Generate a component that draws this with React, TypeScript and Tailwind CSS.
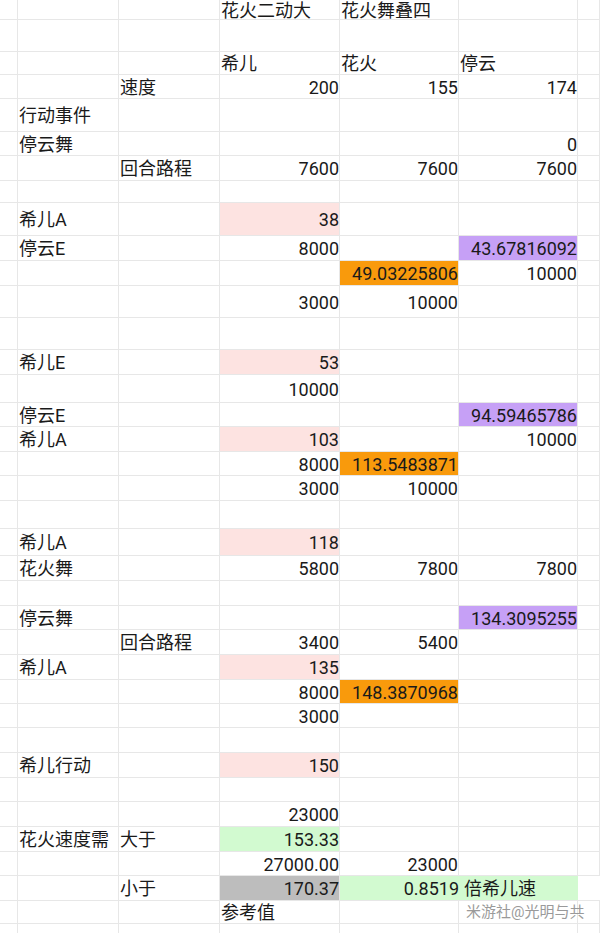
import React from "react";

type Cell = { t?: string; r?: boolean; bg?: string };
type Row = { h: string; c: Record<number, Cell> };

const W = ["w-[18px]", "w-[101px]", "w-[101px]", "w-[120px]", "w-[119px]", "w-[119px]", "flex-1"];

const PINK = "bg-[#fde3e1]";
const PURPLE = "bg-[#c6a0f6]";
const ORANGE = "bg-[#f99a0c]";
const GREEN = "bg-[#d2fad0]";
const GRAY = "bg-[#bdbdbd]";

const n = (t: string, bg?: string): Cell => ({ t, r: true, bg });
const l = (t: string, bg?: string): Cell => ({ t, bg });

const rows: Row[] = [
  { h: "h-[20px]", c: { 3: l("花火二动大"), 4: l("花火舞叠四") } },
  { h: "h-[32px]", c: {} },
  { h: "h-[23px]", c: { 3: l("希儿"), 4: l("花火"), 5: l("停云") } },
  { h: "h-[24px]", c: { 2: l("速度"), 3: n("200"), 4: n("155"), 5: n("174") } },
  { h: "h-[33px]", c: { 1: l("行动事件") } },
  { h: "h-[24px]", c: { 1: l("停云舞"), 5: n("0") } },
  { h: "h-[25px]", c: { 2: l("回合路程"), 3: n("7600"), 4: n("7600"), 5: n("7600") } },
  { h: "h-[22px]", c: {} },
  { h: "h-[33px]", c: { 1: l("希儿A"), 3: n("38", PINK) } },
  { h: "h-[25px]", c: { 1: l("停云E"), 3: n("8000"), 5: n("43.67816092", PURPLE) } },
  { h: "h-[25px]", c: { 4: n("49.03225806", ORANGE), 5: n("10000") } },
  { h: "h-[32px]", c: { 3: n("3000"), 4: n("10000") } },
  { h: "h-[32px]", c: {} },
  { h: "h-[25px]", c: { 1: l("希儿E"), 3: n("53", PINK) } },
  { h: "h-[28px]", c: { 3: n("10000") } },
  { h: "h-[24px]", c: { 1: l("停云E"), 5: n("94.59465786", PURPLE) } },
  { h: "h-[25px]", c: { 1: l("希儿A"), 3: n("103", PINK), 5: n("10000") } },
  { h: "h-[24px]", c: { 3: n("8000"), 4: n("113.5483871", ORANGE) } },
  { h: "h-[25px]", c: { 3: n("3000"), 4: n("10000") } },
  { h: "h-[28px]", c: {} },
  { h: "h-[27px]", c: { 1: l("希儿A"), 3: n("118", PINK) } },
  { h: "h-[25px]", c: { 1: l("花火舞"), 3: n("5800"), 4: n("7800"), 5: n("7800") } },
  { h: "h-[25px]", c: {} },
  { h: "h-[24px]", c: { 1: l("停云舞"), 5: n("134.3095255", PURPLE) } },
  { h: "h-[25px]", c: { 2: l("回合路程"), 3: n("3400"), 4: n("5400") } },
  { h: "h-[25px]", c: { 1: l("希儿A"), 3: n("135", PINK) } },
  { h: "h-[24px]", c: { 3: n("8000"), 4: n("148.3870968", ORANGE) } },
  { h: "h-[24px]", c: { 3: n("3000") } },
  { h: "h-[25px]", c: {} },
  { h: "h-[25px]", c: { 1: l("希儿行动"), 3: n("150", PINK) } },
  { h: "h-[24px]", c: {} },
  { h: "h-[25px]", c: { 3: n("23000") } },
  { h: "h-[25px]", c: { 1: l("花火速度需"), 2: l("大于"), 3: n("153.33", GREEN) } },
  { h: "h-[24px]", c: { 3: n("27000.00"), 4: n("23000") } },
  { h: "h-[25px]", c: {} },
  { h: "h-[23px]", c: { 3: l("参考值") } },
  { h: "h-[12px]", c: {} },
];

function CellView({ i, cell }: { i: number; cell?: Cell }) {
  return (
    <div
      className={`${W[i]} shrink-0 h-full border-r border-[#e7e7e7] flex items-center pt-[2px] overflow-visible whitespace-nowrap ${
        cell?.r ? "justify-end pr-0" : "justify-start pl-[1px]"
      } ${cell?.bg ?? ""}`}
    >
      {cell?.t}
    </div>
  );
}

export default function App() {
  return (
    <div
      className="relative w-[600px] h-[933px] overflow-hidden bg-white text-[18px] leading-none text-[#1a1a1a]"
      style={{ fontFamily: 'Roboto, "Noto Sans CJK SC", sans-serif' }}
    >
      {rows.map((row, ri) => {
        if (ri === 34) {
          return (
            <div key={ri} className={`flex ${row.h} border-b border-[#e7e7e7]`}>
              <CellView i={0} />
              <CellView i={1} />
              <CellView i={2} cell={l("小于")} />
              <CellView i={3} cell={n("170.37", GRAY)} />
              <div className={`w-[238px] shrink-0 h-full flex items-center pt-[2px] ${GREEN}`}>
                <div className="w-[119px] flex justify-end">0.8519</div>
                <div className="pl-[5px] whitespace-nowrap">倍希儿速</div>
              </div>
              <div className="flex-1 h-full" />
            </div>
          );
        }
        return (
          <div key={ri} className={`flex ${row.h} border-b border-[#e7e7e7]`}>
            {W.map((_, i) => (
              <CellView key={i} i={i} cell={row.c[i]} />
            ))}
          </div>
        );
      })}
      <div className="absolute left-[466px] top-[905px] text-[15px] text-[#9a9a9a] whitespace-nowrap">
        米游社@光明与共
      </div>
    </div>
  );
}
